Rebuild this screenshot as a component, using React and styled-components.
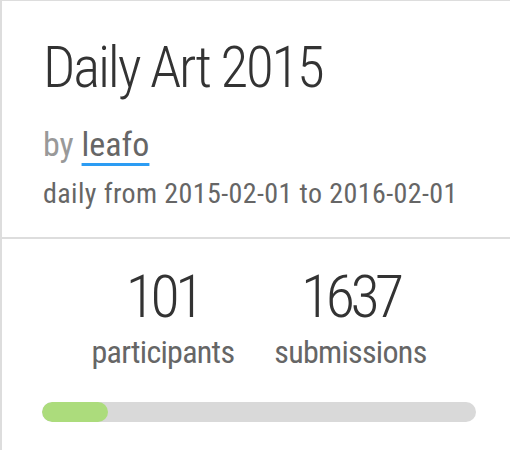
import React from "react";
import styled, { createGlobalStyle } from "styled-components";

const Global = createGlobalStyle`
  html, body { margin: 0; padding: 0; background: #ffffff; }
  body {
    font-family: "Roboto Condensed", Roboto, sans-serif;
    font-stretch: 75%;
  }
`;

const Card = styled.div`
  width: 510px;
  height: 450px;
  box-sizing: border-box;
  border-top: 1px solid #dddddd;
  border-left: 2px solid #dddddd;
  background: #ffffff;
  overflow: hidden;
`;

const Header = styled.div`
  padding: 35px 0 26px 41px;
  border-bottom: 2px solid #dddddd;
`;

const Title = styled.h1`
  margin: 0;
  font-size: 57px;
  line-height: 64px;
  font-weight: 300;
  letter-spacing: -2.2px;
  color: #333333;
  white-space: nowrap;
`;

const Byline = styled.div`
  margin-top: 24px;
  font-size: 34px;
  line-height: 40px;
  color: #999999;
  white-space: nowrap;
`;

const UserLink = styled.a`
  color: #666666;
  text-decoration: underline;
  text-decoration-color: #2c9cf3;
  text-decoration-thickness: 3px;
  text-underline-offset: 7px;
`;

const Schedule = styled.div`
  margin-top: 13px;
  font-size: 28px;
  line-height: 34px;
  letter-spacing: 0.4px;
  color: #666666;
  white-space: nowrap;
`;

const Body = styled.div`
  padding: 26px 34px 0 40px;
`;

const Stats = styled.div`
  display: flex;
  justify-content: center;
  gap: 40px;
`;

const Stat = styled.div`
  display: flex;
  flex-direction: column;
  align-items: center;
`;

const Number = styled.div`
  font-size: 60px;
  line-height: 64px;
  font-weight: 300;
  letter-spacing: -4.5px;
  color: #333333;
`;

const Label = styled.div`
  margin-top: 5px;
  font-size: 32px;
  line-height: 36px;
  letter-spacing: -0.7px;
  color: #666666;
`;

const Track = styled.div`
  margin-top: 32px;
  height: 20px;
  border-radius: 10px;
  background: #d9d9d9;
  overflow: hidden;
`;

const Fill = styled.div`
  height: 100%;
  border-radius: 10px;
  background: #acdc7c;
`;

export default function App() {
  const progress = 66 / 432;
  return (
    <>
      <Global />
      <Card>
        <Header>
          <Title>Daily Art 2015</Title>
          <Byline>
            by <UserLink href="#">leafo</UserLink>
          </Byline>
          <Schedule>daily from 2015-02-01 to 2016-02-01</Schedule>
        </Header>
        <Body>
          <Stats>
            <Stat>
              <Number>101</Number>
              <Label>participants</Label>
            </Stat>
            <Stat>
              <Number>1637</Number>
              <Label>submissions</Label>
            </Stat>
          </Stats>
          <Track>
            <Fill style={{ width: `${progress * 100}%` }} />
          </Track>
        </Body>
      </Card>
    </>
  );
}
